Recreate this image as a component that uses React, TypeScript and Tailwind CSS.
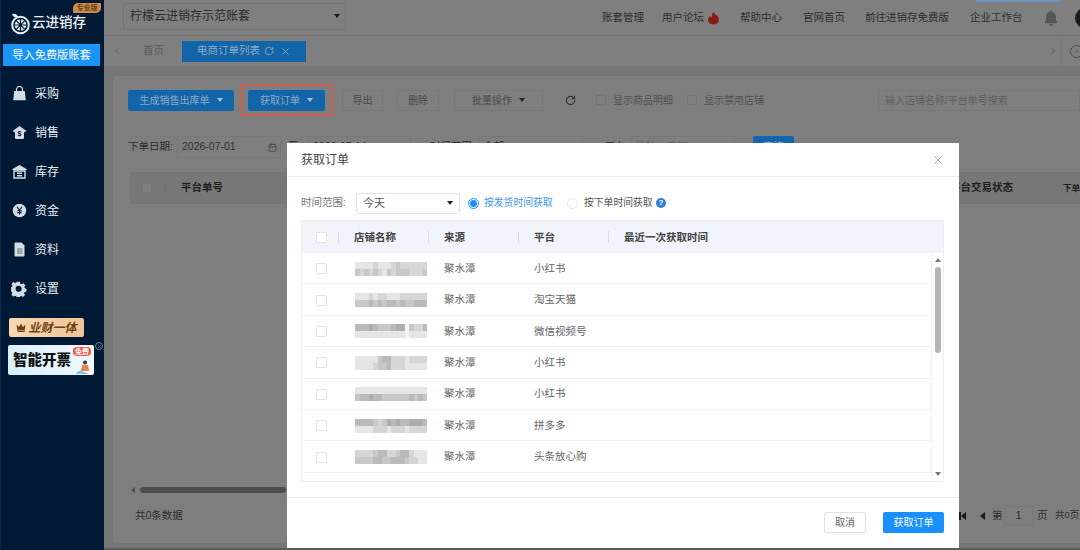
import { ChevronLeft, ChevronRight, RotateCw, X, ChevronUp, Calendar } from 'lucide-react'

const cjk = { fontFamily: '"Liberation Sans","Noto Sans CJK SC",sans-serif' }

function Caret({ className = '' }: { className?: string }) {
  return <span className={`inline-block border-x-[3.5px] border-t-[4px] border-x-transparent ${className}`} />
}

function NavIcon({ name }: { name: string }) {
  const c = '#d5dbe2'
  if (name === 'bag')
    return (
      <svg width="15" height="15" viewBox="0 0 15 15">
        <path d="M4.5 5V3.5a3 3 0 0 1 6 0V5" fill="none" stroke={c} strokeWidth="1.2" />
        <path d="M2.2 5h10.6l1 9.2H1.2z" fill={c} />
      </svg>
    )
  if (name === 'sale')
    return (
      <svg width="15" height="15" viewBox="0 0 15 15">
        <path d="M7.5 1 14.5 6 12 7.5V13a1 1 0 0 1-1 1H4a1 1 0 0 1-1-1V7.5L.5 6z" fill={c} />
        <text x="7.5" y="11" fontSize="7" fontWeight="700" textAnchor="middle" fill="#001a35" fontFamily="Liberation Sans">$</text>
      </svg>
    )
  if (name === 'store')
    return (
      <svg width="15" height="15" viewBox="0 0 15 15">
        <path d="M7.5 1 14.5 5v1.2h-14V5z" fill={c} />
        <path d="M2 7h11v7H2z" fill="none" stroke={c} strokeWidth="1.4" />
        <path d="M5 8.5h5v1.4H5zM5 11h5v1.4H5z" fill={c} />
      </svg>
    )
  if (name === 'yen')
    return (
      <svg width="15" height="15" viewBox="0 0 15 15">
        <circle cx="7.5" cy="7.5" r="6.8" fill={c} />
        <path d="M5 3.8 7.5 7.4 10 3.8M7.5 7.4v4.2M5.3 7.8h4.4M5.3 9.6h4.4" fill="none" stroke="#001a35" strokeWidth="1.1" />
      </svg>
    )
  if (name === 'doc')
    return (
      <svg width="15" height="15" viewBox="0 0 15 15">
        <path d="M2.5 1.5a1 1 0 0 1 1-1h6l3 3v10a1 1 0 0 1-1 1h-8a1 1 0 0 1-1-1z" fill={c} />
        <path d="M5 7h5.5M5 9h5.5M5 11h5.5" stroke="#5a6675" strokeWidth="0.9" />
      </svg>
    )
  return (
    <svg width="16" height="16" viewBox="0 0 16 16">
      <path d="M6.5.8h3l.5 2 1.4.6 1.8-1 2 2.2-1 1.8.6 1.4 1.6.6v2.8l-1.9.6-.6 1.3 1 1.8-2.1 2-1.8-1-1.4.6-.5 1.6h-3l-.5-1.9-1.4-.6-1.8 1-2-2 1-1.8-.6-1.4-1.8-.5V7l1.9-.6.6-1.4-1-1.8 2-2.1 1.8 1 1.3-.6z" transform="scale(0.94)" fill={c} />
      <circle cx="7.6" cy="7.8" r="3" fill="#001a35" />
    </svg>
  )
}

const navItems = [
  ['bag', '采购'],
  ['sale', '销售'],
  ['store', '库存'],
  ['yen', '资金'],
  ['doc', '资料'],
  ['gear', '设置'],
]

function Sidebar() {
  return (
    <aside className="w-[104px] h-full shrink-0 bg-[#001a35] border-l border-[#0b2c4e] flex flex-col relative">
      <div className="h-[44px] flex items-center pl-[8px] pt-[1px] relative">
        <svg width="22" height="24" viewBox="0 0 22 24" className="shrink-0">
          <path d="M3 3c3-1 5 0 6 3-3 1-5 0-6-3z" fill="#e6edf3" />
          <circle cx="11.5" cy="14" r="8.3" fill="none" stroke="#e6edf3" strokeWidth="2" />
          <circle cx="11.5" cy="14" r="5.8" fill="#e6edf3" />
          <path d="M11.5 8v12M5.7 14h11.6M7.4 9.9l8.2 8.2M15.6 9.9l-8.2 8.2" stroke="#001a35" strokeWidth="1.2" />
        </svg>
        <span className="ml-[1px] text-[13.5px] font-medium text-[#eef2f6] leading-none">云进销存</span>
        <span className="absolute left-[72px] top-[3px] w-[28px] h-[10px] bg-[#c98d4f] rounded-tl-[5px] rounded-br-[5px] text-[7px] leading-[10px] text-center text-[#6a3d12] font-bold">专业版</span>
      </div>
      <div className="mx-[2px] h-[22px] w-[97px] bg-[#1a94f5] text-white text-[11.2px] leading-[22px] text-center whitespace-nowrap">导入免费版账套</div>
      <nav className="mt-[8px] flex flex-col">
        {navItems.map(([icon, label]) => (
          <div key={label} className="h-[39px] flex items-center pl-[10px]">
            <span className="w-[16px] flex justify-center">
              <NavIcon name={icon} />
            </span>
            <span className="ml-[8px] text-[12px] text-[#e8edf2]">{label}</span>
          </div>
        ))}
      </nav>
      <div className="mt-[10px] ml-[8px] w-[75px] h-[19px] rounded-[2px] bg-gradient-to-r from-[#f7d9b2] to-[#eec596] flex items-center justify-center gap-[2px]">
        <svg width="10" height="9" viewBox="0 0 10 9">
          <path d="M.5 1.5 3 4 5 .5 7 4l2.5-2.5-.8 5.5H1.3zM1.3 7.6h7.4V9H1.3z" fill="#6d4213" />
        </svg>
        <span className="text-[12px] italic font-bold text-[#6d4213] leading-none whitespace-nowrap">业财一体</span>
      </div>
      <div className="mt-[8px] ml-[7px] w-[86px] h-[30px] rounded-[2px] bg-gradient-to-r from-[#d9effc] to-[#f2f9fe] flex items-center pl-[5px] relative">
        <span className="text-[14.5px] font-black text-[#111] leading-none whitespace-nowrap">智能开票</span>
        <span className="absolute right-[3px] top-[2px] w-[18px] h-[9px] rounded-[4px] bg-[#ef5b4f] text-white text-[7px] leading-[9px] text-center font-bold">免费</span>
        <svg width="16" height="16" viewBox="0 0 16 16" className="absolute right-[2px] bottom-0">
          <circle cx="9" cy="3.5" r="2" fill="#2c3e5a" />
          <path d="M6 6h6l1 6H5z" fill="#f08040" />
          <path d="M0 15c2-4 5-4 8-2l5 2z" fill="#7cc4ec" />
        </svg>
      </div>
      <span className="absolute left-[94px] top-[342px] w-[8px] h-[8px] rounded-full border border-[#6d8296] flex items-center justify-center">
        <X size={5} color="#8ea0b2" />
      </span>
    </aside>
  )
}

const topLinks = [
  ['账套管理', 'ml-0'],
  ['用户论坛', 'ml-[18px]'],
  ['帮助中心', 'ml-[20px]'],
  ['官网首页', 'ml-[21px]'],
  ['前往进销存免费版', 'ml-[20px]'],
  ['企业工作台', 'ml-[21px]'],
]

function TopBar() {
  return (
    <header className="h-[36px] bg-[#7f7f7f] border-b border-[#6e6e6e] flex items-center relative shrink-0">
      <span className="absolute right-[20px] top-0 w-[84px] h-[2px] bg-[#6f97ba]" />
      <div className="ml-[19px] w-[223px] h-[27px] mt-[-3px] shrink-0 rounded-[2px] border border-[#767676] flex items-center pl-[6px] pr-[5px] justify-between">
        <span className="text-[12px] text-[#2d2d2d]">柠檬云进销存示范账套</span>
        <Caret className="border-t-[#1a1a1a]" />
      </div>
      <div className="ml-[256px] flex items-center shrink-0">
        {topLinks.map(([t, m]) => (
          <span key={t} className={`flex items-center text-[10.5px] text-[#2e2e2e] whitespace-nowrap ${m}`}>
            {t}
            {t === '用户论坛' && (
              <svg width="13" height="14" viewBox="0 0 13 14" className="ml-[3px]">
                <path d="M6.5 1c.5 2 5.5 4 5.5 8a5.5 4.5 0 0 1-11 0c0-2 1.5-3 2-4 .5 1 1 1.3 1.5 1.3C4.5 4 5.500 2 6.500 1z" fill="#8c1a14" />
              </svg>
            )}
          </span>
        ))}
      </div>
      <svg width="14" height="16" viewBox="0 0 14 16" className="ml-[21px] shrink-0">
        <path d="M7 .5c.8 0 1.2.5 1.2 1.2C10.5 2.3 12 4.3 12 7v3.500l1.500 2v.8H.5v-.8l1.500-2V7c0-2.700 1.500-4.700 3.800-5.300C5.800 1 6.200.5 7 .5zM5 14h4a2 2 0 0 1-4 0z" fill="#565656" />
      </svg>
      <span className="absolute left-[971px] top-[8px] w-[20px] h-[20px] rounded-full bg-[#1b1b1b]" />
    </header>
  )
}

function TabBar() {
  return (
    <div className="h-[30px] bg-[#7f7f7f] flex items-center shrink-0 overflow-hidden">
      <ChevronLeft size={12} color="#6a6a6a" className="ml-[7px] shrink-0" />
      <span className="ml-[20px] text-[10.5px] text-[#5b5b5b] whitespace-nowrap">首页</span>
      <div className="ml-[18px] w-[124px] h-[21px] shrink-0 bg-[#1265a9] flex items-center pl-[15px] text-[10.5px] text-[#8fa9c2] whitespace-nowrap">
        电商订单列表
        <RotateCw size={10} className="ml-[4px] shrink-0" />
        <X size={11} className="ml-[6px] shrink-0" />
      </div>
      <ChevronRight size={12} color="#606060" className="ml-[741px] shrink-0" />
      <span className="ml-[2px] h-[30px] border-l border-[#767676]" />
      <span className="ml-[8px] w-[13px] h-[13px] rounded-full border border-[#505050] flex items-center justify-center shrink-0">
        <ChevronUp size={9} color="#505050" />
      </span>
    </div>
  )
}

function GhostBtn({ label, w, caret }: { label: string; w: string; caret?: boolean }) {
  return (
    <div className={`h-[21px] shrink-0 ${w} border border-[#787878] rounded-[2px] text-[10px] text-[#4a4a4a] flex items-center justify-center gap-[7px] whitespace-nowrap`}>
      {label}
      {caret && <Caret className="border-t-[#262626]" />}
    </div>
  )
}

function Box() {
  return <span className="block w-[10px] h-[10px] border border-[#747474] bg-[#7e7e7e] rounded-[1px] shrink-0" />
}

function Toolbar() {
  return (
    <div className="h-[40px] mt-[4px] flex items-center shrink-0">
      <div className="ml-[15px] w-[106px] h-[21px] shrink-0 bg-[#1265a9] rounded-[2px] text-[10px] text-[#8fa9c2] flex items-center justify-center gap-[7px] whitespace-nowrap">
        生成销售出库单 <Caret className="border-t-[#a9bfd3]" />
      </div>
      <div className="ml-[6px] shrink-0 border-[2.5px] border-[#c9604f] rounded-[1px] w-[93px] h-[32px] flex items-center justify-center">
        <div className="w-[77px] h-[21px] shrink-0 bg-[#1265a9] rounded-[2px] text-[10px] text-[#8fa9c2] flex items-center justify-center gap-[7px] whitespace-nowrap">
          获取订单 <Caret className="border-t-[#a9bfd3]" />
        </div>
      </div>
      <div className="ml-[9px]"><GhostBtn label="导出" w="w-[41px]" /></div>
      <div className="ml-[14px]"><GhostBtn label="删除" w="w-[42px]" /></div>
      <div className="ml-[15px]"><GhostBtn label="批量操作" w="w-[89px]" caret /></div>
      <RotateCw size={11} color="#333" strokeWidth={2.4} className="ml-[22px] shrink-0" />
      <div className="ml-[20px]"><Box /></div>
      <span className="ml-[7px] w-[60px] shrink-0 text-[10px] text-[#525252] whitespace-nowrap">显示商品明细</span>
      <div className="ml-[14px]"><Box /></div>
      <span className="ml-[7px] w-[60px] shrink-0 text-[10px] text-[#525252] whitespace-nowrap">显示禁用店铺</span>
      <div className="ml-[114px] w-[202px] h-[21px] shrink-0 border border-[#787878] pl-[6px] text-[10px] leading-[19px] text-[#5f5f5f] whitespace-nowrap">输入店铺名称/平台单号搜索</div>
    </div>
  )
}

function FilterRow() {
  const field = 'h-[22px] shrink-0 border border-[#787878] rounded-[2px] flex items-center pl-[4px] whitespace-nowrap'
  return (
    <div className="h-[22px] mt-[16px] flex items-center text-[10.5px] text-[#2e2e2e] shrink-0">
      <span className="ml-[15px] w-[49px] shrink-0 whitespace-nowrap">下单日期:</span>
      <div className={`${field} w-[104px] justify-between pr-[3px] text-[10.5px] text-[#333]`}>
        2026-07-01
        <Calendar size={9} color="#444" />
      </div>
      <span className="ml-[7px] w-[10px] shrink-0">至</span>
      <div className={`${field} ml-[10px] w-[103px]`}>2026-07-14</div>
      <span className="ml-[19px] w-[48px] shrink-0 whitespace-nowrap">时间范围:</span>
      <div className={`${field} w-[105px]`}>全部</div>
      <span className="ml-[22px] w-[25px] shrink-0">平台</span>
      <div className={`${field} w-[105px] text-[#5f5f5f]`}>请输入查询</div>
      <div className="ml-[18px] w-[41px] h-[22px] shrink-0 bg-[#1265a9] rounded-[2px] flex items-center justify-center text-[#8fa9c2]">查询</div>
    </div>
  )
}

function BackTable() {
  return (
    <div className="mt-[14px] ml-[17px] flex-1 flex flex-col min-h-0">
      <div className="h-[32px] bg-[#777777] flex items-center text-[10.5px] font-bold text-[#1f1f1f] shrink-0 whitespace-nowrap overflow-hidden">
        <span className="ml-[12px]"><Box /></span>
        <span className="ml-[13px] h-[12px] border-l border-[#6e6e6e]" />
        <span className="ml-[15px] w-[42px] shrink-0">平台单号</span>
        <span className="ml-[727px] w-[63px] shrink-0">平台交易状态</span>
        <span className="ml-[50px] shrink-0 text-[8.5px]">下单</span>
      </div>
      <div className="flex-1" />
      <div className="h-[8px] flex items-center shrink-0">
        <span className="ml-[1px] border-y-[3.5px] border-r-[4px] border-y-transparent border-r-[#505050]" />
        <span className="ml-[5px] w-[146px] h-[6px] rounded-full bg-[#4e4e4e]" />
      </div>
      <div className="h-[49px] flex text-[10.5px] text-[#2e2e2e] shrink-0">
        <span className="ml-[5px] mt-[14px] w-[53px] shrink-0 whitespace-nowrap">共0条数据</span>
        <div className="ml-[771px] mt-[12px] h-[19px] flex items-center shrink-0 whitespace-nowrap">
          <span className="w-[7px] h-[8px] border-l-2 border-[#1a1a1a] flex items-center">
            <span className="border-y-[4px] border-r-[5px] border-y-transparent border-r-[#1a1a1a]" />
          </span>
          <span className="ml-[14px] border-y-[4px] border-r-[5px] border-y-transparent border-r-[#1a1a1a]" />
          <span className="ml-[7px] w-[10px]">第</span>
          <span className="ml-[2px] w-[29px] h-[19px] border border-[#787878] text-center text-[11px] leading-[17px]">1</span>
          <span className="ml-[4px] w-[10px]">页</span>
          <span className="ml-[8px] text-[9.5px]">共0页</span>
        </div>
      </div>
    </div>
  )
}

// 店铺名称被打码，用灰块模拟马赛克
const rows = [
  { platform: '小红书', tiles: ['eeeedeeedcdddddd', 'cdcdcdecdcccdddc'] },
  { platform: '淘宝天猫', tiles: ['eeededdeeedddddd', 'cccbcbcbbcbccbbb'] },
  { platform: '微信视频号', tiles: ['bbbabcccbaafcddb', 'eeeeeeeeeeefeeee'] },
  { platform: '小红书', tiles: ['eeeeecbbdddedddd', 'eeeedccbdddeeeee'] },
  { platform: '小红书', tiles: ['eeeeeeeeeeeeeeee', 'cbbabbccccccbcbc'] },
  { platform: '拼多多', tiles: ['bbbbcdcababbaaab', 'eeeedddedddedddd'] },
  { platform: '头条放心购', tiles: ['ddddcbbddcbbdeee', 'ccccbbccbbbcddee'] },
]

const greys: Record<string, string> = {
  a: '#adadad',
  b: '#bababa',
  c: '#c8c8c8',
  d: '#d6d6d6',
  e: '#e6e6e6',
  f: '#f5f5f5',
}

function Mosaic({ tiles }: { tiles: string[] }) {
  return (
    <div className="w-[72px] h-[14px] flex flex-col overflow-hidden blur-[0.5px]">
      {tiles.map((line, i) => (
        <div key={i} className="flex h-[7px]">
          {line.split('').map((g, j) => (
            <span key={j} className="w-[4.5px] h-[7px]" style={{ backgroundColor: greys[g] }} />
          ))}
        </div>
      ))}
    </div>
  )
}

const colTemplate = 'grid grid-cols-[36px_90px_90px_90px_1fr] items-center'

function Th({ children }: { children: React.ReactNode }) {
  return <div className="h-[12px] leading-[12px] border-l border-[#d8dee6] pl-[15px] whitespace-nowrap">{children}</div>
}

function Radio({ on }: { on?: boolean }) {
  return (
    <span className={`w-[11px] h-[11px] rounded-full border shrink-0 flex items-center justify-center ${on ? 'border-[#1890ff]' : 'border-[#e8e8e8]'}`}>
      {on && <span className="w-[7px] h-[7px] rounded-full bg-[#1890ff]" />}
    </span>
  )
}

function CheckBox() {
  return <span className="block w-[11px] h-[11px] border border-[#e4e4e4] bg-white rounded-[1px]" />
}

function OrderDialog() {
  return (
    <div className="absolute left-[287px] top-[143px] w-[672px] h-[405px] bg-white flex flex-col" style={cjk}>
      <div className="h-[34px] border-b border-[#ececec] flex items-center justify-between pl-[14px] pr-[14px] pt-[1px] shrink-0">
        <span className="text-[12px] text-[#444]">获取订单</span>
        <X size={14} color="#999" strokeWidth={1.5} />
      </div>
      <div className="h-[22px] mt-[15px] pl-[14px] flex items-center shrink-0">
        <span className="text-[10.5px] text-[#777] w-[55px] whitespace-nowrap">时间范围:</span>
        <div className="w-[104px] h-[21px] border border-[#e2e2e2] rounded-[2px] flex items-center justify-between pl-[6px] pr-[6px] text-[11px] text-[#555]">
          今天
          <Caret className="border-t-[#222]" />
        </div>
        <span className="ml-[8px]"><Radio on /></span>
        <span className="ml-[5px] w-[68px] text-[9.8px] text-[#3c96ea] whitespace-nowrap">按发货时间获取</span>
        <span className="ml-[15px]"><Radio /></span>
        <span className="ml-[6px] w-[68px] text-[9.8px] text-[#555] whitespace-nowrap">按下单时间获取</span>
        <span className="ml-[4px] w-[10px] h-[10px] rounded-full bg-[#2f7fd8] text-white text-[8px] leading-[10px] text-center font-bold">?</span>
      </div>
      <div className="ml-[14px] mt-[6px] w-[643px] h-[262px] border border-[#eeeeee] flex flex-col relative shrink-0">
        <div className={`${colTemplate} h-[32px] bg-[#f1f5fb] text-[10.5px] font-bold text-[#444] shrink-0`}>
          <span className="pl-[14px]"><CheckBox /></span>
          <Th>店铺名称</Th>
          <Th>来源</Th>
          <Th>平台</Th>
          <Th>最近一次获取时间</Th>
        </div>
        <div className="pr-[12px]">
          {rows.map((r, i) => (
            <div key={i} className={`${colTemplate} h-[31.4px] pt-[1px] border-b border-[#f1f1f1] text-[10.5px] text-[#666]`}>
              <span className="pl-[14px]"><CheckBox /></span>
              <div className="pl-[17px]"><Mosaic tiles={r.tiles} /></div>
              <span className="pl-[16px]">聚水潭</span>
              <span className="pl-[16px] whitespace-nowrap">{r.platform}</span>
              <span />
            </div>
          ))}
        </div>
        <div className="absolute right-0 top-[32px] bottom-0 w-[12px] border-l border-[#f2f2f2] flex flex-col items-center pt-[5px]">
          <span className="border-x-[3.5px] border-b-[4px] border-x-transparent border-b-[#777]" />
          <span className="mt-[5px] w-[6px] h-[86px] rounded-full bg-[#b5b5b5]" />
          <span className="mt-auto mb-[5px] border-x-[3.5px] border-t-[4px] border-x-transparent border-t-[#777]" />
        </div>
      </div>
      <div className="mt-[15px] border-t border-[#f0f0f0] flex-1 flex items-start justify-end pr-[15px] pt-[14px]">
        <div className="w-[42px] h-[21px] border border-[#e2e2e2] rounded-[2px] text-[10px] text-[#666] flex items-center justify-center">取消</div>
        <div className="ml-[17px] w-[61px] h-[21px] bg-[#1890ff] rounded-[2px] text-[10px] text-white flex items-center justify-center">获取订单</div>
      </div>
    </div>
  )
}

export default function App() {
  return (
    <div className="w-[1080px] h-[550px] relative overflow-hidden flex bg-[#5c5c5c]" style={cjk}>
      <Sidebar />
      <main className="flex-1 min-w-0 h-[548px] flex flex-col">
        <TopBar />
        <TabBar />
        <div className="flex-1 min-h-0 bg-[#767676] pt-[10px] pl-[9px] pb-[5px]">
          <div className="h-full bg-[#7e7e7e] flex flex-col rounded-l-[2px] overflow-hidden">
            <Toolbar />
            <FilterRow />
            <BackTable />
          </div>
        </div>
      </main>
      <OrderDialog />
    </div>
  )
}
